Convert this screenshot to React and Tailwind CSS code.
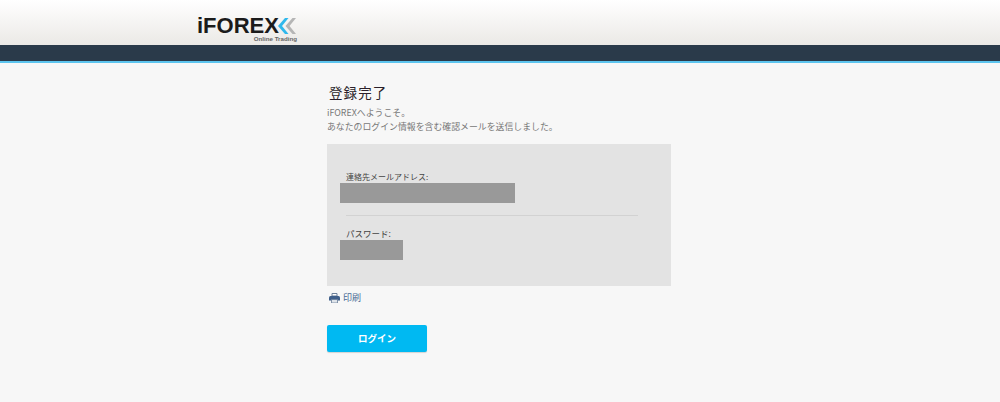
const font = { fontFamily: '"Noto Sans CJK JP", "Liberation Sans", sans-serif' };

function Logo() {
  return (
    <div className="w-[100px] pt-[17px]">
      <div className="flex items-center h-[17px]">
        <span className="font-['Liberation_Sans',sans-serif] text-[22px] leading-[17px] font-bold text-[#1b1b1b]">iFOREX</span>
        <svg width="18" height="16" viewBox="0 0 18 16" className="ml-[-1px]">
          <path d="M7 0 L0 8 L7 16 L10.5 16 L4 8 L10.5 0 Z" fill="#2fb8ec" />
          <path d="M14.5 0 L7.5 8 L14.5 16 L18 16 L11.5 8 L18 0 Z" fill="#b5b5b5" />
        </svg>
      </div>
      <div className="mt-[1px] text-right font-['Liberation_Sans',sans-serif] text-[6.2px] leading-[8px] font-bold text-[#666]">Online Trading</div>
    </div>
  );
}

function PrinterIcon() {
  return (
    <svg width="11" height="10" viewBox="0 0 11 10">
      <path d="M3 0.5 H8 V3 H3 Z" fill="#fff" stroke="#6b7f99" strokeWidth="1" />
      <path d="M1.5 3 H9.5 Q11 3 11 4.5 V7.5 H0 V4.5 Q0 3 1.5 3 Z" fill="#3f5f8a" />
      <path d="M2.5 6.5 H8.5 V10 H2.5 Z" fill="#dfe4ea" stroke="#6b7f99" strokeWidth="0.8" />
    </svg>
  );
}

export default function App() {
  return (
    <div className="min-h-[402px] bg-[#f7f7f7]" style={font}>
      {/* Header */}
      <div className="h-[45px] bg-gradient-to-b from-white to-[#ebe9e6] pl-[197px]">
        <Logo />
      </div>
      <div className="h-[16px] bg-[#2a3a4a]" />
      <div className="h-[2px] bg-[#5cc4ee]" />

      {/* Content */}
      <div className="ml-[327px] w-[344px]">
        <h1 className="pt-[20px] pl-[2px] text-[13.5px] leading-[18px] tracking-[1.1px] font-normal text-[#2a1f2a]">登録完了</h1>
        <div className="mt-[5px] text-[8.9px] leading-[13.5px] text-[#777]">
          <p>iFOREXへようこそ。</p>
          <p>あなたのログイン情報を含む確認メールを送信しました。</p>
        </div>

        <div className="mt-[11px] h-[142px] bg-[#e3e3e3] pt-[27px]">
          <div className="pl-[19px] text-[8px] leading-[12px] text-[#444]">連絡先メールアドレス:</div>
          <div className="ml-[13px] h-[20px] w-[175px] bg-[#999]" />
          <div className="ml-[19px] mt-[12px] w-[292px] border-t border-[#d2d2d2]" />
          <div className="pl-[19px] mt-[11px] pb-[1px] text-[8.5px] leading-[12px] text-[#444]">パスワード:</div>
          <div className="ml-[13px] h-[20px] w-[63px] bg-[#999]" />
        </div>

        <div className="mt-[6px] flex items-center gap-[3px] pl-[2px] h-[12px]">
          <PrinterIcon />
          <a className="text-[9px] leading-[12px] text-[#4a6a94]">印刷</a>
        </div>

        <button className="mt-[21px] block h-[27px] w-[100px] rounded-[2px] bg-[#00b9f2] text-center text-[9.5px] font-bold text-white shadow-[0_1px_1px_rgba(0,0,0,0.15)]">ログイン</button>
      </div>
    </div>
  );
}
